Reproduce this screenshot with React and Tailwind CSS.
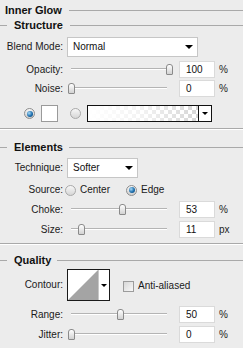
import React from "react";

const font = { fontFamily: '"Liberation Sans", Arial, sans-serif' };

function Header({ children, left = true, lineGap = "ml-[7px]" }) {
  return (
    <div className="flex h-[12px] items-center">
      {left && <div className="h-px w-[7px] bg-[#a9a9a9]" />}
      <span className={`${left ? "ml-[7px]" : "ml-[5px]"} text-[11px] font-bold leading-none text-[#111]`}>
        {children}
      </span>
      <div className={`${lineGap} h-px flex-1 bg-[#a9a9a9]`} />
    </div>
  );
}

function Label({ children }) {
  return (
    <div className="w-[63px] shrink-0 text-right text-[10px] leading-none text-[#1a1a1a]">{children}</div>
  );
}

function Arrow() {
  return (
    <div className="h-0 w-0 border-x-[4px] border-t-[4px] border-x-transparent border-t-black" />
  );
}

function Dropdown({ value, width }) {
  return (
    <div
      className={`ml-[4px] flex h-[20px] items-center justify-between border border-[#c6c6c6] bg-white pl-[5px] pr-[4px] ${width}`}
    >
      <span className="text-[10px] leading-none text-[#111]">{value}</span>
      <Arrow />
    </div>
  );
}

function Slider({ value }) {
  const left = 4 + value * 0.98 - 3.5;
  return (
    <div className="relative ml-[4px] h-[17px] w-[108px] shrink-0">
      <div className="absolute left-[4px] top-[7px] h-[2px] w-[96px] border-b border-white bg-[#b4b4b4]" />
      <div
        className="absolute top-[3px] h-[11px] w-[7px] rounded-t-[3px] rounded-b-[1px] border border-[#8a8a8a] bg-linear-to-b from-white to-[#d2d2d2]"
        style={{ left: `${left}px` }}
      />
    </div>
  );
}

function SliderRow({ label, value, unit, mt }) {
  return (
    <div className={`flex h-[17px] items-center ${mt}`}>
      <Label>{label}</Label>
      <Slider value={value} />
      <div className="ml-[4px] flex h-[17px] w-[36px] items-center border border-[#dadada] bg-white pl-[6px] text-[10px] leading-none text-[#111]">
        {value}
      </div>
      <span className="ml-[4px] text-[10px] leading-none text-[#222]">{unit}</span>
    </div>
  );
}

function Radio({ checked }) {
  if (checked) {
    return (
      <div className="flex h-[11px] w-[11px] shrink-0 items-center justify-center rounded-full border border-[#8d8d8d] bg-linear-to-b from-[#f6f6f6] to-[#cfcfcf]">
        <div className="h-[6px] w-[6px] rounded-full bg-[radial-gradient(circle_at_35%_35%,#a9dbf8,#1d6fae_55%,#0b3c68)]" />
      </div>
    );
  }
  return (
    <div className="h-[11px] w-[11px] shrink-0 rounded-full border border-[#a9a9a9] bg-linear-to-b from-[#f7f7f7] to-[#d6d6d6]" />
  );
}

function Separator({ mt }) {
  return (
    <div className={mt}>
      <div className="h-px bg-[#a9a9a9]" />
      <div className="h-px bg-white" />
    </div>
  );
}

export default function App() {
  return (
    <div className="h-[348px] w-[243px] overflow-hidden bg-[#ececec]" style={font}>
      {/* Inner Glow */}
      <div className="mt-[1px] flex h-[18px] items-center">
        <span className="ml-[5px] text-[11px] font-bold leading-none text-[#111]">Inner Glow</span>
        <div className="ml-[7px] h-px flex-1 bg-[#a9a9a9]" />
      </div>

      <Header>Structure</Header>

      <div className="mt-[6px] flex h-[20px] items-center">
        <Label>Blend Mode:</Label>
        <Dropdown value="Normal" width="w-[131px]" />
      </div>

      <SliderRow label="Opacity:" value={100} unit="%" mt="mt-[4px]" />
      <SliderRow label="Noise:" value={0} unit="%" mt="mt-[2px]" />

      {/* colour row */}
      <div className="mt-[8px] flex h-[17px] items-center">
        <div className="ml-[24px]">
          <Radio checked />
        </div>
        <div className="ml-[6px] h-[17px] w-[17px] border border-[#9a9a9a] bg-white" />
        <div className="ml-[12px]">
          <Radio />
        </div>
        <div className="ml-[6px] flex h-[17px] w-[125px] border border-[#111] bg-white">
          <div className="h-full flex-1 bg-[repeating-conic-gradient(#d6d6d6_0%_25%,#ffffff_0%_50%)] bg-[length:8px_8px]">
            <div className="h-full w-full bg-linear-to-r from-white via-white/70 to-white/0" />
          </div>
          <div className="flex w-[13px] items-center justify-center border-l border-[#111] bg-white">
            <div className="h-0 w-0 border-x-[3px] border-t-[3px] border-x-transparent border-t-black" />
          </div>
        </div>
      </div>

      <Separator mt="mt-[6px]" />

      <div className="mt-[11px]">
        <Header lineGap="ml-[6px]">Elements</Header>
      </div>

      <div className="mt-[5px] flex h-[20px] items-center">
        <Label>Technique:</Label>
        <Dropdown value="Softer" width="w-[71px]" />
      </div>

      {/* Source */}
      <div className="mt-[4px] flex h-[16px] items-center text-[10px] leading-none text-[#1a1a1a]">
        <Label>Source:</Label>
        <div className="ml-[2px]">
          <Radio />
        </div>
        <span className="ml-[4px]">Center</span>
        <div className="ml-[16px]">
          <Radio checked />
        </div>
        <span className="ml-[4px]">Edge</span>
      </div>

      <SliderRow label="Choke:" value={53} unit="%" mt="mt-[3px]" />
      <SliderRow label="Size:" value={11} unit="px" mt="mt-[3px]" />

      <Separator mt="mt-[5px]" />

      <div className="mt-[9px]">
        <Header lineGap="ml-[6px]">Quality</Header>
      </div>

      {/* Contour */}
      <div className="mt-[3px] flex h-[32px] items-center">
        <Label>Contour:</Label>
        <div className="ml-[4px] flex h-[32px] w-[43px] border border-[#1a1a1a] bg-white">
          <svg width="30" height="30" viewBox="0 0 30 30" className="block">
            <polygon points="0,30 30,0 30,30" fill="#a4a4a4" />
          </svg>
          <div className="flex flex-1 items-center justify-center border-l border-[#c8c8c8]">
            <div className="h-0 w-0 border-x-[3px] border-t-[3px] border-x-transparent border-t-black" />
          </div>
        </div>
        <div className="ml-[13px] mt-[2px] h-[11px] w-[11px] border border-[#9c9c9c] bg-linear-to-br from-[#d8d8d8] to-[#f8f8f8]" />
        <span className="ml-[4px] mt-[2px] text-[10px] leading-none text-[#1a1a1a]">Anti-aliased</span>
      </div>

      <SliderRow label="Range:" value={50} unit="%" mt="mt-[5px]" />
      <SliderRow label="Jitter:" value={0} unit="%" mt="mt-[3px]" />
    </div>
  );
}
